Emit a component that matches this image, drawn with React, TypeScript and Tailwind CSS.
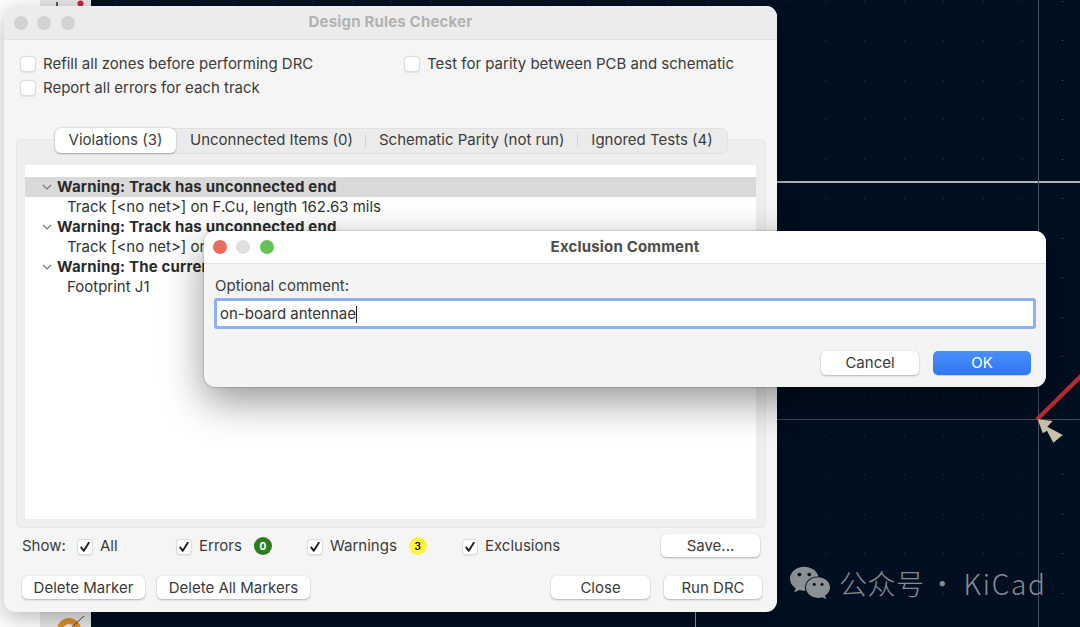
import React from "react";
import { FaWeixin } from "react-icons/fa";

const xs = Array.from({ length: 26 }, (_, i) => 1061.7 - i * 39.45);
const ys = Array.from({ length: 17 }, (_, i) => 1 + i * 39.45);

function Lights({ colors, xs }: { colors: string[]; xs: string[] }) {
  return (
    <>
      {colors.map((c, i) => (
        <span key={i} className={`absolute top-1/2 -translate-y-1/2 w-[14px] h-[14px] rounded-full ${c} ${xs[i]}`} />
      ))}
    </>
  );
}

function Btn({ children, className = "" }: { children: React.ReactNode; className?: string }) {
  return (
    <div className={`h-[23px] flex items-center justify-center bg-white rounded-[5px] shadow-[0_1px_2px_rgba(0,0,0,0.25),0_0_1px_rgba(0,0,0,0.2)] text-[#3a3a3a] ${className}`}>
      {children}
    </div>
  );
}

function Box({ checked = false }: { checked?: boolean }) {
  return (
    <span className="w-[16px] h-[16px] shrink-0 bg-white rounded-[4px] border border-[#dcdcdc] shadow-[0_0.5px_1px_rgba(0,0,0,0.08)] flex items-center justify-center">
      {checked && (
        <svg width="12" height="12" viewBox="0 0 12 12" fill="none">
          <path d="M2.2 6.4 L4.8 9.8 L9.8 1.8" stroke="#1d1d1d" strokeWidth="1.9" strokeLinecap="round" strokeLinejoin="round" />
        </svg>
      )}
    </span>
  );
}

function Check({ label, checked, className = "" }: { label: string; checked?: boolean; className?: string }) {
  return (
    <div className={`flex items-center gap-[7px] ${className}`}>
      <Box checked={checked} />
      <span>{label}</span>
    </div>
  );
}

function Chevron() {
  return (
    <svg width="10" height="6" viewBox="0 0 10 6" fill="none" className="shrink-0">
      <path d="M1 1 L5 5 L9 1" stroke="#777" strokeWidth="1.2" />
    </svg>
  );
}

function Row({ title, child, selected }: { title: string; child: string; selected?: boolean }) {
  return (
    <>
      <div className={`h-5 flex items-center pl-[17px] gap-[5px] font-bold tracking-[0.18px] text-[#2a2a2a] ${selected ? "bg-[#d9d9d9]" : ""}`}>
        <Chevron />
        <span>{title}</span>
      </div>
      <div className="h-5 flex items-center pl-[42px] text-[#333]">
        <span>{child}</span>
      </div>
    </>
  );
}

const font = "font-['Inter','Liberation_Sans',sans-serif]";

export default function App() {
  return (
    <div className={`relative w-[1080px] h-[627px] overflow-hidden flex bg-white text-[15px] text-[#3c3c3c] ${font}`}>
      <div className="w-10 shrink-0 bg-white" />
      <div className="relative w-[51px] shrink-0 bg-[#e6e6e6]">
        <svg width="51" height="627" className="block">
          <rect x="16" y="2" width="2" height="4" fill="#555" />
          <circle cx="40.5" cy="3.5" r="3" fill="#c2263c" />
          <circle cx="29" cy="630" r="9" fill="none" stroke="#dd8f2a" strokeWidth="6" />
          <path d="M32 627 L44 616" stroke="#444" strokeWidth="1" />
        </svg>
      </div>
      <div className="relative flex-1 bg-[#020f21]">
        <svg width="989" height="627" className="block">
          <g transform="translate(-91 0)">
            {xs.flatMap((x, i) =>
              ys.map((y) => (
                <rect key={`${i}-${y}`} x={Math.round(x)} y={Math.round(y)} width="1" height="1" fill={i === 0 ? "#56616c" : "#263444"} />
              ))
            )}
            <rect x="91" y="181" width="989" height="2" fill="#b0b3b5" />
            <line x1="91" x2="1080" y1="419.5" y2="419.5" stroke="#414d5a" strokeWidth="1" />
            <line x1="1038.5" x2="1038.5" y1="0" y2="627" stroke="#47525e" strokeWidth="1" />
            <line x1="695.5" x2="695.5" y1="600" y2="627" stroke="#8d9196" strokeWidth="1" />
            <line x1="1037" y1="419.5" x2="1082" y2="375" stroke="#bd2e2f" strokeWidth="4.2" />
            <polygon
              points="1037.7,419.3 1052.7,421 1047.3,426.7 1062.7,435 1053.3,442.7 1047,430.7 1042.7,433.3"
              fill="#c9c4ab"
            />
          </g>
        </svg>
      </div>

      {/* Watermark */}
      <div className="absolute left-[789px] top-[564px] flex items-center text-[#858b93]">
        <FaWeixin className="w-[42px] h-[38px] text-[#8b9097]" />
        <span className="ml-[8px] text-[28px] leading-[38px] whitespace-pre font-['Noto_Sans_CJK_SC','Noto_Sans',sans-serif] font-light tracking-[0.5px]">
          公众号<span className="-ml-[3px]"> · </span><span className="tracking-[1.8px]">KiCad</span>
        </span>
      </div>

      {/* Design Rules Checker window */}
      <div className="absolute left-[4px] top-[6px] w-[773px] h-[606px] flex flex-col rounded-[11px] bg-[#f5f5f5] shadow-[0_6px_22px_rgba(0,0,0,0.28)] overflow-hidden">
        <div className="relative h-[34px] shrink-0 bg-[#ececec] border-b border-[#e2e2e2] flex items-center justify-center font-bold tracking-[0.18px] text-[#b2b2b2]">
          <Lights
            colors={["bg-[#d2d2d2]", "bg-[#d2d2d2]", "bg-[#d2d2d2]"]}
            xs={["left-[10px]", "left-[33px]", "left-[57px]"]}
          />
          <span>Design Rules Checker</span>
        </div>

        <div className="pl-4 pt-[12px] flex h-[24px] box-content items-center">
          <Check label="Refill all zones before performing DRC" className="w-[384px]" />
          <Check label="Test for parity between PCB and schematic" />
        </div>
        <div className="pl-4 flex h-[24px] items-center">
          <Check label="Report all errors for each track" />
        </div>

        {/* Notebook */}
        <div className="ml-3 mt-[39px] w-[750px] h-[389px] shrink-0 flex flex-col rounded-[5px] bg-[#eeeeee] border border-[#e8e8e8]">
          <div className="-mt-3 ml-[37px] w-[674px] h-[26px] shrink-0 flex items-center rounded-[7px] bg-[#ebebeb] border border-[#e2e2e2] text-[#3c3c3c] pb-px">
            <div className="w-[121px] h-[25px] flex items-center justify-center bg-white rounded-[6px] shadow-[0_0.5px_2px_rgba(0,0,0,0.3)]">Violations (3)</div>
            <div className="pl-[14px] pr-[12px]">Unconnected Items (0)</div>
            <span className="w-px h-[13px] bg-[#d4d4d4]" />
            <div className="px-[13px]">Schematic Parity (not run)</div>
            <span className="w-px h-[13px] bg-[#d4d4d4]" />
            <div className="pl-[13px]">Ignored Tests (4)</div>
          </div>
          <div className="ml-2 mr-[9px] mt-[11px] h-[354px] bg-white pt-3">
            <Row title="Warning: Track has unconnected end" child="Track [<no net>] on F.Cu, length 162.63 mils" selected />
            <Row title="Warning: Track has unconnected end" child="Track [<no net>] on F.Cu, length 162.63 mils" />
            <Row title="Warning: The current PCB design rules" child="Footprint J1" />
          </div>
        </div>

        {/* Show row */}
        <div className="mt-[6px] pl-[18px] flex items-center h-[23px]">
          <span className="w-[55px] pt-[2px]">Show:</span>
          <Check label="All" className="w-[99px] pt-[2px]" checked />
          <div className="w-[131px] flex items-center pt-[2px]">
            <Check label="Errors" checked />
            <span className="ml-[12px] -mt-px w-[18px] h-[18px] rounded-full bg-[#2e7d1f] text-white text-[10px] font-bold flex items-center justify-center">0</span>
          </div>
          <div className="w-[155px] flex items-center pt-[2px]">
            <Check label="Warnings" checked />
            <span className="ml-[12px] -mt-px w-[18px] h-[18px] rounded-full bg-[#fdf43d] text-black text-[10px] font-semibold flex items-center justify-center">3</span>
          </div>
          <Check label="Exclusions" className="flex-1 pt-[2px]" checked />
          <Btn className="w-[99px] mr-[17px] pt-px">Save...</Btn>
        </div>

        {/* Footer */}
        <div className="mt-[19px] pl-[18px] flex items-center">
          <Btn className="w-[123px] pt-px">Delete Marker</Btn>
          <Btn className="w-[153px] ml-3 pt-px">Delete All Markers</Btn>
          <Btn className="w-[99px] ml-[241px] pt-px">Close</Btn>
          <Btn className="w-[98px] ml-[14px] pt-px">Run DRC</Btn>
        </div>
      </div>

      {/* Exclusion Comment dialog */}
      <div className="absolute left-[204px] top-[231px] w-[842px] h-[156px] flex flex-col rounded-[11px] bg-[#f4f4f4] shadow-[0_14px_40px_rgba(0,0,0,0.42),0_0_2px_rgba(0,0,0,0.45)] overflow-hidden">
        <div className="relative h-[33px] shrink-0 bg-white border-b border-[#e4e4e4] flex items-center justify-center font-bold tracking-[0.18px] text-[#4c4c4c]">
          <Lights
            colors={["bg-[#ee6a5f]", "bg-[#e0e0e0]", "bg-[#61c454]"]}
            xs={["left-[9px]", "left-[32px]", "left-[56px]"]}
          />
          <span>Exclusion Comment</span>
        </div>
        <div className="pl-[11px] pt-[13px] leading-[17px]">Optional comment:</div>
        <div className="mx-[10px] mt-[4px] h-[31px] flex items-center pl-[3px] pt-px bg-white rounded-[3px] border-[3px] border-[#8fb0f2] text-[#333]">
          <span>on-board antennae</span>
          <span className="w-px h-[17px] bg-[#222]" />
        </div>
        <div className="mt-[22px] pr-[15px] flex justify-end gap-[14px]">
          <Btn className="w-[98px] h-[24px]">Cancel</Btn>
          <div className="w-[98px] h-[24px] flex items-center justify-center rounded-[5px] bg-gradient-to-b from-[#4a90fb] to-[#2f75f0] text-white shadow-[0_1px_1px_rgba(0,0,0,0.15)]">OK</div>
        </div>
      </div>
    </div>
  );
}
